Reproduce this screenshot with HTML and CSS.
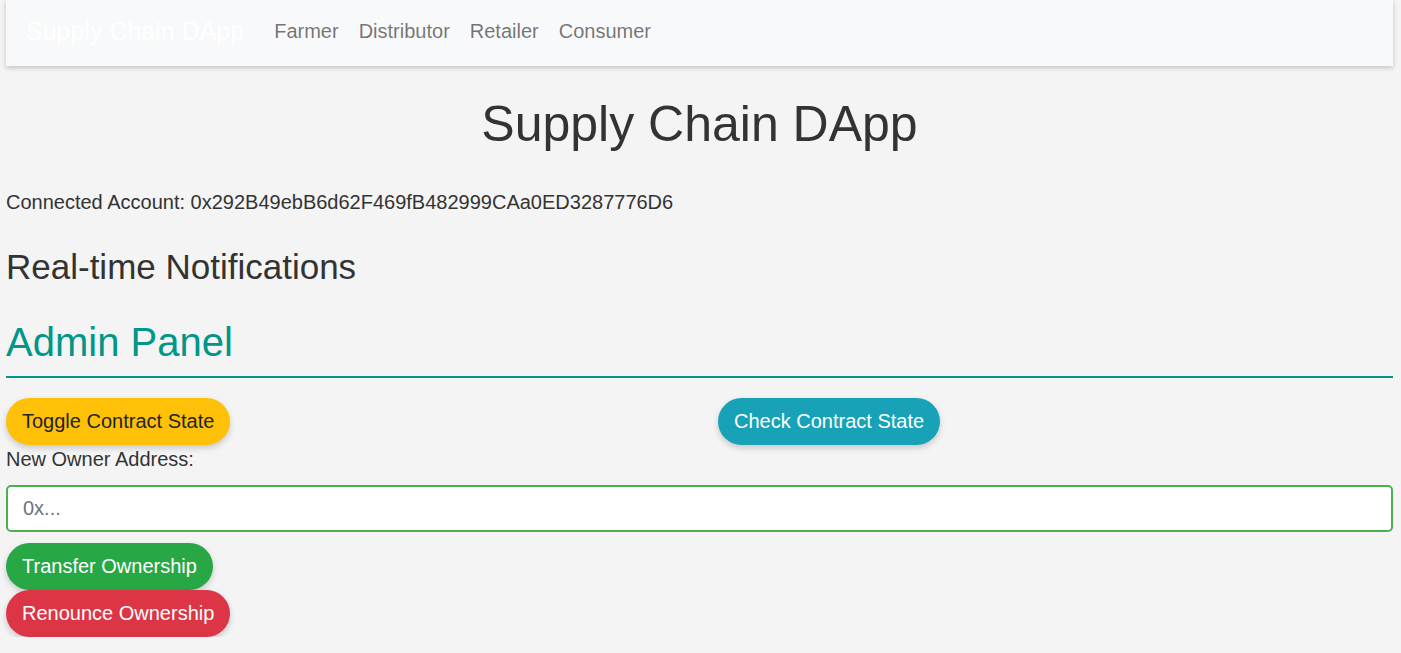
FILE: index.html
```html
<!DOCTYPE html>
<html>
<head>
<meta charset="utf-8">
<link rel="stylesheet" href="styles.css">
</head>
<body>
<div class="page">
  <nav class="navbar">
    <span class="brand">Supply Chain DApp</span>
    <a class="nav-link">Farmer</a>
    <a class="nav-link">Distributor</a>
    <a class="nav-link">Retailer</a>
    <a class="nav-link">Consumer</a>
  </nav>
  <h1 class="title">Supply Chain DApp</h1>
  <p class="account">Connected Account: 0x292B49ebB6d62F469fB482999CAa0ED3287776D6</p>
  <h2 class="notif">Real-time Notifications</h2>
  <h2 class="admin">Admin Panel</h2>
  <div class="row">
    <div><button class="btn btn-warning">Toggle Contract State</button></div>
    <div><button class="btn btn-info">Check Contract State</button></div>
  </div>
  <label class="label">New Owner Address:</label>
  <input class="input" type="text" placeholder="0x...">
  <div class="stack">
    <div><button class="btn btn-success">Transfer Ownership</button></div>
    <div><button class="btn btn-danger">Renounce Ownership</button></div>
  </div>
</div>
</body>
</html>
```
FILE: styles.css
```css
html, body {
  margin: 0;
  padding: 0;
  background: #f4f4f4;
  font-family: "Liberation Sans", Arial, sans-serif;
  color: #333;
}
.page {
  padding: 0 8px 0 6px;
}
.navbar {
  display: flex;
  align-items: center;
  height: 66px;
  background: #f8f9fa;
  box-shadow: 0 2px 5px rgba(0,0,0,0.2);
  padding: 0 20px 4px;
  box-sizing: border-box;
}
.brand {
  color: #fff;
  font-size: 25px;
  margin-right: 30px;
}
.nav-link {
  color: rgba(0,0,0,0.55);
  font-size: 20px;
  margin-right: 20px;
}
.title {
  font-weight: normal;
  font-size: 50px;
  text-align: center;
  margin: 30px 0 0;
  line-height: 56px;
}
.account {
  font-size: 20px;
  margin: 38px 0 0;
  line-height: 24px;
}
.notif {
  font-weight: normal;
  font-size: 35px;
  margin: 33px 0 0;
  line-height: 40px;
}
.admin {
  font-weight: normal;
  font-size: 40px;
  color: #009688;
  margin: 31px 0 0;
  line-height: 48px;
  padding-bottom: 10px;
  border-bottom: 2px solid #009688;
}
.row {
  display: grid;
  grid-template-columns: 712px 1fr;
  margin-top: 20px;
}
.btn {
  border: none;
  border-radius: 24px;
  font-family: "Liberation Sans", Arial, sans-serif;
  font-size: 20px;
  height: 47px;
  padding: 0 16px;
  box-shadow: 0 3px 6px rgba(0,0,0,0.18);
  cursor: pointer;
}
.btn-warning { background: #ffc107; color: #212529; }
.btn-info { background: #17a2b8; color: #fff; }
.btn-success { background: #28a745; color: #fff; }
.btn-danger { background: #dc3545; color: #fff; }
.label {
  display: block;
  font-size: 20px;
  line-height: 24px;
  margin-top: 2px;
}
.input {
  display: block;
  box-sizing: border-box;
  width: 100%;
  height: 47px;
  margin-top: 14px;
  border: 2px solid #4caf50;
  border-radius: 5px;
  background: #fff;
  padding: 0 15px;
  font-family: "Liberation Sans", Arial, sans-serif;
  font-size: 20px;
  outline: none;
}
.input::placeholder { color: #6c757d; }
.stack {
  margin-top: 11px;
}
```
